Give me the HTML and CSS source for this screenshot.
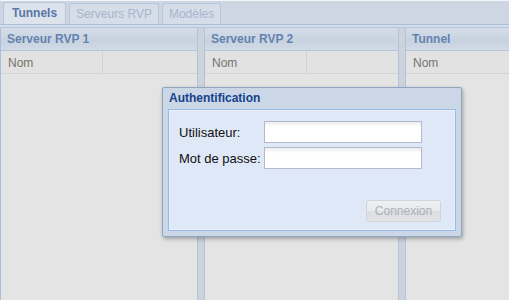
FILE: index.html
```html
<!DOCTYPE html>
<html lang="fr">
<head>
    <meta charset="UTF-8">
    <title>Tunnels</title>
    <link rel="stylesheet" href="styles.css">
</head>
<body>
    <div class="tabbar">
        <div class="tab active">Tunnels</div>
        <div class="tab">Serveurs RVP</div>
        <div class="tab">Modèles</div>
    </div>
    <div class="tabstrip"></div>

    <div class="panels">
        <div class="panel p1">
            <div class="panel-head">Serveur RVP 1</div>
            <div class="cols"><div class="col">Nom</div><div class="col"></div></div>
            <div class="panel-body"></div>
        </div>
        <div class="splitter"></div>
        <div class="panel p2">
            <div class="panel-head">Serveur RVP 2</div>
            <div class="cols"><div class="col">Nom</div><div class="col"></div></div>
            <div class="panel-body"></div>
        </div>
        <div class="splitter"></div>
        <div class="panel p3">
            <div class="panel-head">Tunnel</div>
            <div class="cols"><div class="col">Nom</div></div>
            <div class="panel-body"></div>
        </div>
    </div>

    <div class="dialog">
        <div class="dialog-title">Authentification</div>
        <div class="dialog-body">
            <div class="field">
                <label for="user">Utilisateur:</label>
                <input type="text" id="user">
            </div>
            <div class="field">
                <label for="pass">Mot de passe:</label>
                <input type="password" id="pass">
            </div>
            <div class="actions">
                <button disabled>Connexion</button>
            </div>
        </div>
    </div>
</body>
</html>
```

FILE: styles.css
```css
body {
    margin: 0;
    width: 509px;
    height: 300px;
    overflow: hidden;
    background: #e4e4e4;
    font-family: "Liberation Sans", Arial, sans-serif;
    font-size: 12px;
    position: relative;
}
.tabbar {
    height: 24px;
    background: #cdd6e2;
    border-top: 1px solid #f4f6f9;
    box-sizing: border-box;
    display: flex;
    align-items: flex-end;
    padding-left: 3px;
    gap: 3px;
}
.tab {
    height: 20px;
    line-height: 21px;
    padding: 0 6px;
    border: 1px solid #b8c7da;
    border-bottom: none;
    border-radius: 3px 3px 0 0;
    background: #d5dde8;
    color: #a6b6cd;
    font-size: 12px;
}
.tab.active {
    background: #dce3ed;
    color: #5876a3;
    font-weight: bold;
    height: 21px;
    padding: 0 8px;
}
.tabstrip {
    height: 2px;
    background: #d5dde8;
    border-top: 1px solid #a9bfdb;
    border-bottom: 1px solid #b6c6da;
}
.panels {
    display: flex;
    height: 272px;
}
.panel {
    display: flex;
    flex-direction: column;
    background: #e4e4e4;
}
.p1 { width: 196px; border-left: 1px solid #a9bfdb; }
.p2 { width: 193px; }
.p3 { flex: 1; }
.splitter {
    width: 6px;
    background: #ccd3dd;
    border-left: 1px solid #b3c3d7;
    border-right: 1px solid #b3c3d7;
}
.panel-head {
    height: 22px;
    line-height: 23px;
    padding-left: 6px;
    background: linear-gradient(#d3dce8, #cbd5e2 50%, #c6d1df 50%, #d1dae6);
    border-bottom: 1px solid #b7c7da;
    color: #6482ae;
    font-weight: bold;
}
.cols {
    height: 22px;
    display: flex;
    background: #e2e2e2;
    border-bottom: 1px solid #d4d4d4;
}
.col {
    flex: 0 0 102px;
    box-sizing: border-box;
    line-height: 24px;
    padding-left: 7px;
    color: #76736d;
    border-right: 1px solid #d2d2d2;
}
.p3 .col { border-right: none; }
.panel-body { flex: 1; }

.dialog {
    position: absolute;
    left: 162px;
    top: 87px;
    width: 300px;
    height: 150px;
    box-sizing: border-box;
    background: #cbd7e7;
    border: 1px solid #8ea4c1;
    border-radius: 2px;
    box-shadow: 1px 2px 4px rgba(0,0,0,0.3);
    padding: 0 5px 5px 5px;
    display: flex;
    flex-direction: column;
}
.dialog-title {
    height: 21px;
    line-height: 21px;
    padding-left: 1px;
    color: #15428b;
    font-weight: bold;
}
.dialog-body {
    flex: 1;
    background: #dfe8f6;
    border: 1px solid #99bbe8;
    box-shadow: inset 0 0 0 1px #e9eff9;
    padding: 11px 14px 8px 10px;
    display: flex;
    flex-direction: column;
    gap: 4px;
}
.field {
    display: flex;
    align-items: center;
}
.field label {
    width: 85px;
    font-size: 13px;
    color: #111;
}
.field input {
    width: 158px;
    height: 22px;
    box-sizing: border-box;
    border: 1px solid #b5b8c8;
    background: linear-gradient(#ececec, #fff 5px);
    margin: 0;
    padding: 0 3px;
    outline: none;
}
.actions {
    margin-top: auto;
    display: flex;
    justify-content: flex-end;
}
.actions button {
    width: 75px;
    height: 22px;
    box-sizing: border-box;
    border: 1px solid #d0d3d8;
    border-radius: 3px;
    background: linear-gradient(#eff0f2, #e8e9eb 50%, #dcdee1 50%, #e2e3e6);
    color: #a9b1bc;
    font-family: "Liberation Sans", Arial, sans-serif;
    font-size: 12px;
    padding: 0;
}
```
